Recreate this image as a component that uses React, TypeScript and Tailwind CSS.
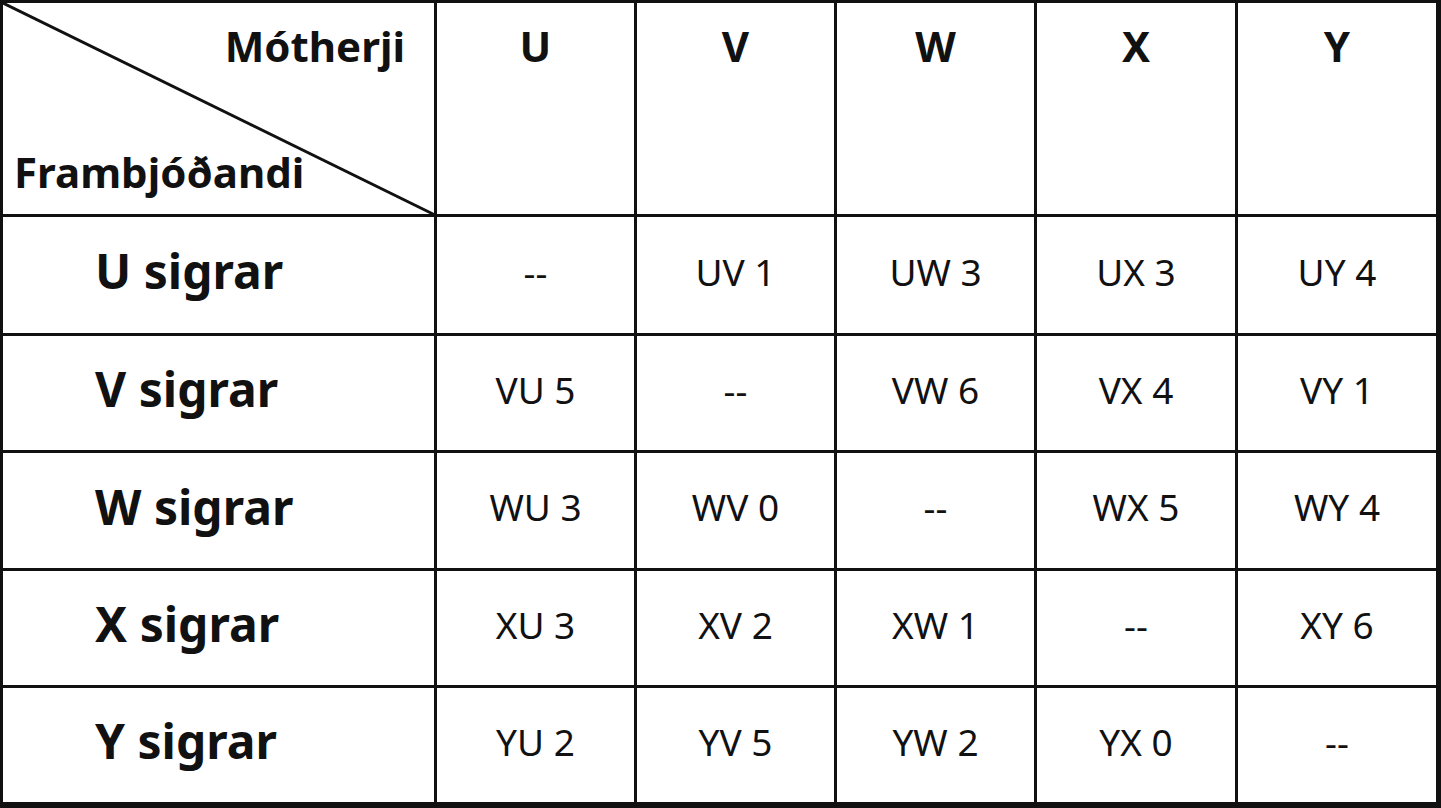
const cols = ["U", "V", "W", "X", "Y"];

const rows: { label: string; cells: string[] }[] = [
  { label: "U sigrar", cells: ["--", "UV 1", "UW 3", "UX 3", "UY 4"] },
  { label: "V sigrar", cells: ["VU 5", "--", "VW 6", "VX 4", "VY 1"] },
  { label: "W sigrar", cells: ["WU 3", "WV 0", "--", "WX 5", "WY 4"] },
  { label: "X sigrar", cells: ["XU 3", "XV 2", "XW 1", "--", "XY 6"] },
  { label: "Y sigrar", cells: ["YU 2", "YV 5", "YW 2", "YX 0", "--"] },
];

export default function App() {
  return (
    <div
      className="w-[1441px] h-[808px] bg-[#111] text-[#111] grid grid-cols-[431px_197px_197px_197px_198px_198px] grid-rows-[211px_116px_114px_115px_114px_114px] gap-[3px] pt-[3px] pl-[3px] pr-[5px] pb-[6px]"
      style={{ fontFamily: '"Noto Sans", "Open Sans", sans-serif' }}
    >
      <div className="relative bg-white flex flex-col justify-between pt-[22px] pb-[21px] pl-[11px] pr-[29px] font-bold text-[42px] leading-[42px]">
        <svg
          className="absolute left-0 top-0 overflow-visible"
          width="431"
          height="211"
          aria-hidden="true"
        >
          <line x1="-3" y1="-1.5" x2="432" y2="212" stroke="#111" strokeWidth="3" />
        </svg>
        <span className="relative self-end">Mótherji</span>
        <span className="relative self-start">Frambjóðandi</span>
      </div>
      {cols.map((c) => (
        <div key={c} className="bg-white flex justify-center pt-[22px] font-bold text-[42px] leading-[42px]">
          {c}
        </div>
      ))}
      {rows.map((r) => (
        <>
          <div key={r.label} className="bg-white flex items-center pl-[92px] pb-[8px] font-bold text-[48px] leading-none">
            {r.label}
          </div>
          {r.cells.map((v, i) => (
            <div key={r.label + i} className="bg-white flex items-center justify-center pb-[8px] text-[37px] leading-none">
              {v}
            </div>
          ))}
        </>
      ))}
    </div>
  );
}
